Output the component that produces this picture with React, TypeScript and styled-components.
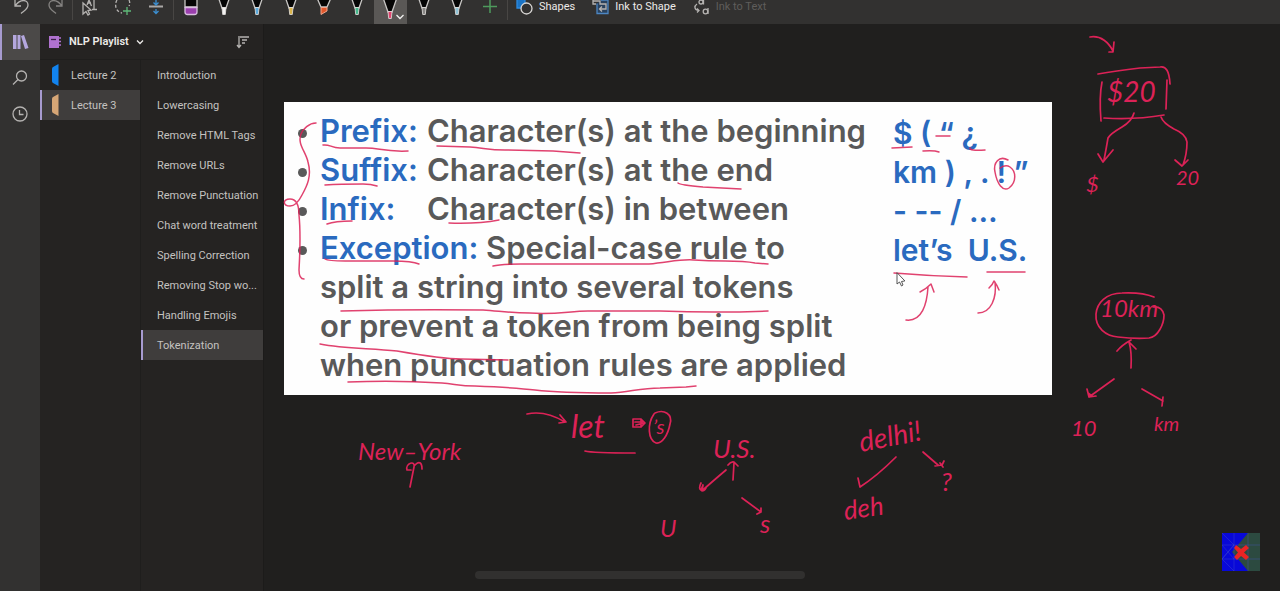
import React from "react";
import styled, { createGlobalStyle, css } from "styled-components";

const color = {
  bar: "#323130",
  panel: "#252322",
  canvas: "#201f1e",
  selected: "#3f3d3c",
  accent: "#a79bd0",
  text: "#c4c2c0",
  bright: "#eceae8",
  ink: "#dc2257",
  blue: "#2a6abf",
  slate: "#595959",
};

const GlobalStyle = createGlobalStyle`
  * { box-sizing: border-box; }
  html, body, #root { height: 100%; }
  body {
    margin: 0;
    background: ${color.canvas};
    color: ${color.text};
    font-family: Roboto, "Open Sans", sans-serif;
    font-size: 11px;
    overflow: hidden;
  }
  button { font: inherit; color: inherit; border: 0; padding: 0; background: none; }
  ul { list-style: none; margin: 0; padding: 0; }
`;

const Page = styled.div`
  position: relative;
  display: flex;
  flex-direction: column;
  min-height: 100vh;
`;

/* ---------- toolbar ---------- */

const Toolbar = styled.header`
  display: flex;
  height: 24px;
  padding-left: 5px;
  background: ${color.bar};
  overflow: hidden;
`;

const ToolGroup = styled.div<{ $count: number; $width: number }>`
  display: grid;
  grid-template-columns: repeat(${(p) => p.$count}, 1fr);
  width: ${(p) => p.$width}px;
`;

const Divider = styled.div`
  width: 1px;
  height: 20px;
  background: #484644;
`;

const Tool = styled.button<{ $active?: boolean }>`
  display: flex;
  justify-content: center;
  height: 24px;
  background: ${(p) => (p.$active ? "#5a5856" : "transparent")};
`;

const LabelGroup = styled.div`
  display: flex;
  gap: 17px;
  padding-left: 8px;
`;

const LabelTool = styled.button<{ $dim?: boolean }>`
  display: flex;
  gap: 6px;
  height: 24px;
  line-height: 14px;
  color: ${(p) => (p.$dim ? "#5f5d5b" : color.bright)};
`;

/* ---------- navigation ---------- */

const Body = styled.div`
  display: flex;
  flex: 1;
`;

const Rail = styled.nav`
  display: flex;
  flex-direction: column;
  flex: none;
  width: 40px;
  background: ${color.bar};
`;

const RailButton = styled.button<{ $active?: boolean }>`
  display: flex;
  align-items: center;
  justify-content: center;
  height: 36px;
  ${(p) =>
    p.$active &&
    css`
      background: #4b4948;
      box-shadow: inset 2px 0 ${color.accent};
    `}
`;

const Navigator = styled.aside`
  display: flex;
  flex-direction: column;
  flex: none;
  width: 224px;
  background: ${color.panel};
  border-right: 1px solid #1c1b1a;
`;

const NavHeader = styled.div`
  display: flex;
  align-items: center;
  justify-content: space-between;
  height: 36px;
  padding: 0 13px 0 8px;
  border-bottom: 1px solid #1f1e1d;
`;

const Notebook = styled.button`
  display: flex;
  align-items: center;
  gap: 7px;
  color: ${color.bright};
  font-weight: 600;
`;

const SortButton = styled.button`
  display: flex;
`;

const Lists = styled.div`
  display: grid;
  grid-template-columns: 100px minmax(0, 1fr);
  flex: 1;
`;

const List = styled.ul<{ $ruled?: boolean }>`
  border-left: ${(p) => (p.$ruled ? "1px solid #1f1e1d" : "0")};
`;

const Row = styled.button<{ $active?: boolean; $inset: number }>`
  display: flex;
  align-items: center;
  gap: 12px;
  width: 100%;
  height: 30px;
  padding-left: ${(p) => p.$inset}px;
  text-align: left;
  white-space: nowrap;
  ${(p) =>
    p.$active &&
    css`
      background: ${color.selected};
      box-shadow: inset 2px 0 ${color.accent};
    `}
`;

/* ---------- canvas ---------- */

const Canvas = styled.main`
  position: relative;
  flex: 1;
  min-width: 0;
  padding: 78px 20px 0;
  overflow: hidden;
`;

const Slide = styled.section`
  display: grid;
  grid-template-columns: 573px 1fr;
  width: 768px;
  padding: 9px 0 11px 36px;
  background: #fefefe;
  color: ${color.slate};
  font-family: Inter, sans-serif;
  font-size: 31px;
  font-weight: 600;
  line-height: 39px;
`;

const Rule = styled.li`
  position: relative;
  white-space: nowrap;

  &::before {
    content: "";
    position: absolute;
    left: -22px;
    top: 18px;
    width: 9px;
    height: 9px;
    border-radius: 50%;
    background: ${color.slate};
  }
`;

const Term = styled.strong<{ $tab?: boolean }>`
  display: inline-block;
  min-width: ${(p) => (p.$tab ? 107 : 0)}px;
  color: ${color.blue};
  font-weight: 600;
`;

const Examples = styled.ul`
  padding-top: 3px;
  color: ${color.blue};
  font-size: 30px;
  white-space: pre;
`;

const InkLayer = styled.svg`
  position: absolute;
  left: 0;
  top: 0;
  fill: none;
  stroke: ${color.ink};
  stroke-width: 1.7;
  stroke-linecap: round;
  stroke-linejoin: round;
  pointer-events: none;
`;

const InkWord = styled.text<{ $size: number }>`
  fill: ${color.ink};
  stroke: none;
  font-family: Lato, sans-serif;
  font-style: italic;
  font-size: ${(p) => p.$size}px;
`;

const ScrollPill = styled.div`
  position: absolute;
  left: 50%;
  bottom: 12px;
  width: 330px;
  height: 8px;
  margin-left: -165px;
  border-radius: 4px;
  background: #31302f;
`;

const Badge = styled.svg`
  position: absolute;
  right: 20px;
  bottom: 20px;
`;

/* ---------- data ---------- */

const pens = [
  { tip: "#f3f2f1" },
  { tip: "#59a9dc" },
  { tip: "#d9b44a" },
  { tip: "#e2572b", wide: true },
  { tip: "#45b98c" },
  { tip: "#e0446f", active: true },
  { tip: "#8a8886" },
  { tip: "#8fc3d6" },
];

const sections = [
  { name: "Lecture 2", tint: "#1283ef" },
  { name: "Lecture 3", tint: "#d6a676" },
];

const pages = [
  "Introduction",
  "Lowercasing",
  "Remove HTML Tags",
  "Remove URLs",
  "Remove Punctuation",
  "Chat word treatment",
  "Spelling Correction",
  "Removing Stop wo...",
  "Handling Emojis",
  "Tokenization",
];

const examples = ["$ ( “ ¿", "km ) , . ! ”", "- -- / …", "let’s  U.S."];

const slideStrokes = [
  "M316 123C309 123 303 129 301 134C297 144 306 152 308 162C312 176 307 186 302 195C298 203 294 206 290 206C283 206 282 199 290 199C298 199 299 208 299 215C301 235 300 252 299 270Q299 279 304 279",
  "M323 145C330 144 331 148 340 148L366 148C380 148 383 152 408 151",
  "M437 146L470 147C484 148 489 150 505 150L553 151L580 153",
  "M325 185C340 184 352 184 363 184Q371 184 377 186",
  "M678 183Q680 185 703 187L741 189",
  "M327 224Q335 221 352 221",
  "M449 223Q478 224 499 220",
  "M325 259Q328 261 345 261L393 261Q412 261 419 264",
  "M493 266Q500 264 521 264L649 264C670 262 680 259 694 260Q708 261 725 261Q745 261 755 263L768 264",
  "M341 311Q410 309 483 310C500 311 508 313 530 313C555 315 570 311 588 311L660 311Q715 313 768 311",
  "M320 344C345 349 370 348 397 351C420 355 445 359 461 359L508 360",
  "M348 382Q395 380 442 383C455 384 460 386 475 386C500 387 520 388 535 390C560 393 590 393 611 393C630 392 640 388 660 388L686 387L696 386",
  "M892 148L912 147",
  "M923 151Q934 150 939 152",
  "M936 136L950 136",
  "M970 148Q969 151 985 150",
  "M1008 160C999 155 993 163 995 172C997 184 1003 192 1009 188C1017 182 1016 171 1010 167C1007 165 1003 166 1000 168",
  "M894 273Q930 276 967 277",
  "M987 272L1025 272",
  "M906 320C922 322 927 304 928 287M920 292Q926 289 931 284L934 292",
  "M978 313C991 313 997 298 995 282M989 288Q993 284 994 281Q997 285 999 290",
];

const canvasStrokes = [
  "M1090 37C1101 35 1109 43 1113 51M1114 42L1113 52L1109 52",
  "M1098 74Q1115 71 1140 68L1160 67Q1169 65 1170 84",
  "M1102 82Q1099 97 1101 121M1167 80L1166 109M1104 118Q1135 120 1164 115",
  "M1134 113Q1132 121 1122 127Q1110 134 1108 138Q1106 150 1104 160M1098 154L1103 162L1113 150",
  "M1161 117Q1163 123 1174 129Q1186 134 1187 142Q1187 154 1183 165M1175 160L1182 166L1188 160",
  "M1154 297Q1142 292 1122 293C1106 293 1097 303 1096 314C1095 328 1106 336 1118 337Q1135 339 1149 338C1158 337 1164 324 1164 315Q1162 306 1153 307",
  "M1131 368Q1132 352 1129 342M1117 351Q1122 345 1131 340M1129 342L1136 349",
  "M1114 379L1089 397M1087 389L1089 397L1096 396M1088 393L1092 396",
  "M1142 389L1163 401M1163 397L1162 406",
  "M410 487L414 467C416 460 405 463 407 470L411 470M414 466C420 459 422 464 422 469",
  "M527 414Q545 410 565 422M560 415L566 422L559 423",
  "M633 419L641 419L641 427L633 427ZM635 422L642 422M636 425L644 423M641 419L645 423L641 427",
  "M655 413C664 409 673 414 670 424C668 435 662 444 656 443C648 440 647 424 654 414",
  "M585 451Q592 453 635 453",
  "M733 480L734 463M728 465Q731 461 734 462L738 466",
  "M726 470Q713 481 704 489M701 483C697 491 704 493 706 488L701 490L703 485L702 491",
  "M742 498L761 512M761 508L761 512L757 514",
  "M896 457Q877 476 860 487M858 478L860 487",
  "M923 452L938 465M944 461L942 465L935 466M940 463L943 467",
];

const inkWords = [
  { text: "$20", x: 1107, y: 102, size: 28 },
  { text: "$", x: 1086, y: 192, size: 22 },
  { text: "20", x: 1176, y: 185, size: 20 },
  { text: "10km", x: 1100, y: 317, size: 24 },
  { text: "10", x: 1071, y: 436, size: 22 },
  { text: "km", x: 1154, y: 431, size: 20 },
  { text: "New–York", x: 358, y: 460, size: 24 },
  { text: "let", x: 571, y: 438, size: 32 },
  { text: "’s", x: 653, y: 434, size: 20 },
  { text: "U.S.", x: 713, y: 458, size: 26 },
  { text: "U", x: 660, y: 537, size: 24 },
  { text: "s", x: 760, y: 533, size: 26 },
  { text: "delhi!", x: 861, y: 452, size: 28, tilt: -11 },
  { text: "deh", x: 845, y: 520, size: 26, tilt: -8 },
  { text: "?", x: 941, y: 491, size: 26 },
];

/* ---------- drawings ---------- */

const Icon = ({ children, w = 24, h = 24 }: { children: React.ReactNode; w?: number; h?: number }) => (
  <svg width={w} height={h} viewBox={`0 0 ${w} ${h}`} fill="none" stroke="#b5b3b1" strokeWidth="1.3" aria-hidden="true">
    {children}
  </svg>
);

const Pen = ({ tip, wide, active }: { tip: string; wide?: boolean; active?: boolean }) => (
  <Icon w={32}>
    {wide ? (
      <>
        <path d="M9 -2L13 7H19L23 -2Z" fill="#050505" stroke="#c8c6c4" />
        <path d="M13 7.500H19V11L13 14.500Z" fill={tip} stroke="#f0a58b" strokeWidth="1" />
      </>
    ) : (
      <g transform={active ? "translate(0 4)" : undefined}>
        <path d="M9.500 -5L14 8H18L22.500 -5Z" fill="#050505" stroke="#c8c6c4" />
        <path d="M14 7.500H18L17.300 14.500H14.700Z" fill={tip} stroke="#e4e2e0" strokeWidth=".8" />
      </g>
    )}
    {active && <path d="M22.500 15L26 18.500L29.500 15" stroke="#f3f2f1" />}
  </Icon>
);

export default function App() {
  return (
    <>
      <GlobalStyle />
      <Page>
        <Toolbar>
          <ToolGroup $count={2} $width={67}>
            <Tool aria-label="Undo">
              <Icon><path d="M5 0V6H11M5.500 5.500C10 -1 18 -1 18 5C18 9 14 11 11 13.500" /></Icon>
            </Tool>
            <Tool aria-label="Redo">
              <Icon><g stroke="#858381"><path d="M19 0V6H13M18.500 5.500C14 -1 6 -1 6 5C6 9 10 11 13 13.500" /></g></Icon>
            </Tool>
          </ToolGroup>
          <Divider />
          <ToolGroup $count={3} $width={100}>
            <Tool aria-label="Select objects or text">
              <Icon>
                <path d="M5 3V14L8 11.500L10 15L11.500 14L10 10.500L13 10Z" />
                <path d="M9 5L11 0L13.500 6M10 3H13M16 0V9M14 9.500H19" />
              </Icon>
            </Tool>
            <Tool aria-label="Lasso select">
              <Icon>
                <path d="M6 0C3 5 5 12 11 13" strokeDasharray="3 2" />
                <path d="M18 0C19 2 19 4 18 6" strokeDasharray="3 2" />
                <path d="M16 7V15M12 11H20" stroke="#5fb878" />
              </Icon>
            </Tool>
            <Tool aria-label="Insert space">
              <Icon>
                <path d="M5 6.500H19" stroke="#aaa8a6" strokeWidth="2" />
                <path d="M12 0V4M9.500 2.500L12 5L14.500 2.500M12 9V14M9.500 11L12 13.500L14.500 11" stroke="#3c8fd1" />
              </Icon>
            </Tool>
          </ToolGroup>
          <Divider />
          <ToolGroup $count={10} $width={333}>
            <Tool aria-label="Eraser">
              <Icon>
                <path d="M6 -2H18V7H6Z" fill="#050505" stroke="#c8c6c4" />
                <path d="M6 7.500H18V12Q18 14.500 15.500 14.500H8.500Q6 14.500 6 12Z" fill="#9b3fae" stroke="#d9bfe0" />
              </Icon>
            </Tool>
            {pens.map((pen, i) => (
              <Tool key={i} $active={pen.active} aria-label={`Pen ${i + 1}`}>
                <Pen {...pen} />
              </Tool>
            ))}
            <Tool aria-label="Add pen">
              <Icon><path d="M12 0V13M5 6.500H19" stroke="#4e9a5c" strokeWidth="1.500" /></Icon>
            </Tool>
          </ToolGroup>
          <Divider />
          <LabelGroup>
            <LabelTool>
              <Icon w={17}>
                <path d="M1 -1H9V8H1Z" fill="#1a73c4" stroke="#2d8be0" />
                <circle cx="10.500" cy="8.500" r="5.500" fill="#323130" stroke="#d8d6d4" />
              </Icon>
              Shapes
            </LabelTool>
            <LabelTool>
              <Icon w={17}>
                <path d="M1 0V4H4" />
                <path d="M5 3.500V13.500H16V0H9" stroke="#4d86c2" fill="#29415d" />
                <path d="M1 1H8V4H14V9H8M10 6.500L7.500 9L10 11.500" />
              </Icon>
              Ink to Shape
            </LabelTool>
            <LabelTool $dim disabled>
              <Icon w={17}>
                <circle cx="8" cy="2" r="2" />
                <path d="M10.500 0V4.500M4 4C1 6 1 10 6 10.500M4 8.500L6 10.500L4 12.500" />
                <circle cx="12.500" cy="11.500" r="2.300" />
                <path d="M15 8V14" />
              </Icon>
              Ink to Text
            </LabelTool>
          </LabelGroup>
        </Toolbar>

        <Body>
          <Rail aria-label="Views">
            <RailButton $active aria-label="Notebooks">
              <Icon w={18} h={18}>
                <g fill="#b4a7de" stroke="none">
                  <path d="M2 2H5.500V16H2ZM6.500 2H9.500V16H6.500ZM10 3L13 2L17.500 15L14 16Z" />
                </g>
              </Icon>
            </RailButton>
            <RailButton aria-label="Search">
              <Icon w={18} h={18}>
                <circle cx="10.500" cy="7" r="5" />
                <path d="M7 10.500L2 15.500" />
              </Icon>
            </RailButton>
            <RailButton aria-label="Recent">
              <Icon w={18} h={18}>
                <circle cx="9" cy="9" r="7" />
                <path d="M8.500 5V9.500H12.500" />
              </Icon>
            </RailButton>
          </Rail>

          <Navigator>
            <NavHeader>
              <Notebook>
                <Icon w={14} h={14}>
                  <path d="M1 1H11V13H1Z" fill="#b072cf" stroke="none" />
                  <path d="M11 3H13M11 6.500H13M11 10H13" stroke="#b072cf" />
                  <path d="M3 4.500H8" stroke="#3c2149" />
                </Icon>
                NLP Playlist
                <Icon w={8} h={8}><path d="M1 2.500L4 5.500L7 2.500" stroke="#eceae8" /></Icon>
              </Notebook>
              <SortButton aria-label="Sort">
                <Icon w={14} h={14}><path d="M3 1V12M1 10L3 12.500L5 10M4 2H13M6 5H11M6 8H9" /></Icon>
              </SortButton>
            </NavHeader>
            <Lists>
              <List>
                {sections.map((s) => (
                  <li key={s.name}>
                    <Row $inset={10} $active={s.name === "Lecture 3"}>
                      <svg width="9" height="22" viewBox="0 0 9 22" fill={s.tint} aria-hidden="true">
                        <path d="M8.500 0V22L3 19Q2 18.500 2 17V5Q2 3.500 3 3Z" />
                      </svg>
                      {s.name}
                    </Row>
                  </li>
                ))}
              </List>
              <List $ruled>
                {pages.map((name) => (
                  <li key={name}>
                    <Row $inset={16} $active={name === "Tokenization"}>{name}</Row>
                  </li>
                ))}
              </List>
            </Lists>
          </Navigator>

          <Canvas>
            <Slide>
              <ul>
                <Rule><Term $tab>Prefix:</Term>Character(s) at the beginning</Rule>
                <Rule><Term $tab>Suffix:</Term>Character(s) at the end</Rule>
                <Rule><Term $tab>Infix:</Term>Character(s) in between</Rule>
                <Rule>
                  <Term>Exception:</Term> Special-case rule to<br />
                  split a string into several tokens<br />
                  or prevent a token from being split<br />
                  when punctuation rules are applied
                </Rule>
              </ul>
              <Examples>
                {examples.map((e) => <li key={e}>{e}</li>)}
              </Examples>
            </Slide>
            <InkLayer width="1016" height="567" viewBox="264 24 1016 567">
              <g strokeWidth="1.500" opacity=".85">
                {slideStrokes.map((d) => <path key={d} d={d} />)}
              </g>
              {canvasStrokes.map((d) => <path key={d} d={d} />)}
              {inkWords.map((w) => (
                <InkWord
                  key={w.text + w.x}
                  x={w.x}
                  y={w.y}
                  $size={w.size}
                  transform={w.tilt ? `rotate(${w.tilt} ${w.x} ${w.y})` : undefined}
                >
                  {w.text}
                </InkWord>
              ))}
              <path d="M897 273V284L899.500 282L901.500 286L903 285L901.500 281.500L904.500 281Z" fill="#fff" stroke="#444" strokeWidth=".9" />
            </InkLayer>
          </Canvas>
        </Body>

        <ScrollPill />
        <Badge width="38" height="38" viewBox="0 0 38 38" aria-hidden="true">
          <rect width="38" height="38" fill="#2c4a40" />
          <path d="M0 0H26L10 19L26 38H0Z" fill="#0808d8" />
          <path d="M0 12H38M0 26H38M12 0V38M26 0V38M0 0L12 12L0 26M12 12L0 26L12 38M0 12L12 26" fill="none" stroke="#4a55c8" strokeWidth=".5" opacity=".7" />
          <path d="M14 12L19 16L24 12L27 15L22 19.500L27 24L24 27L19 23L15 27L12 24L16 19.500L12 15Z" fill="#ea2424" />
        </Badge>
      </Page>
    </>
  );
}
